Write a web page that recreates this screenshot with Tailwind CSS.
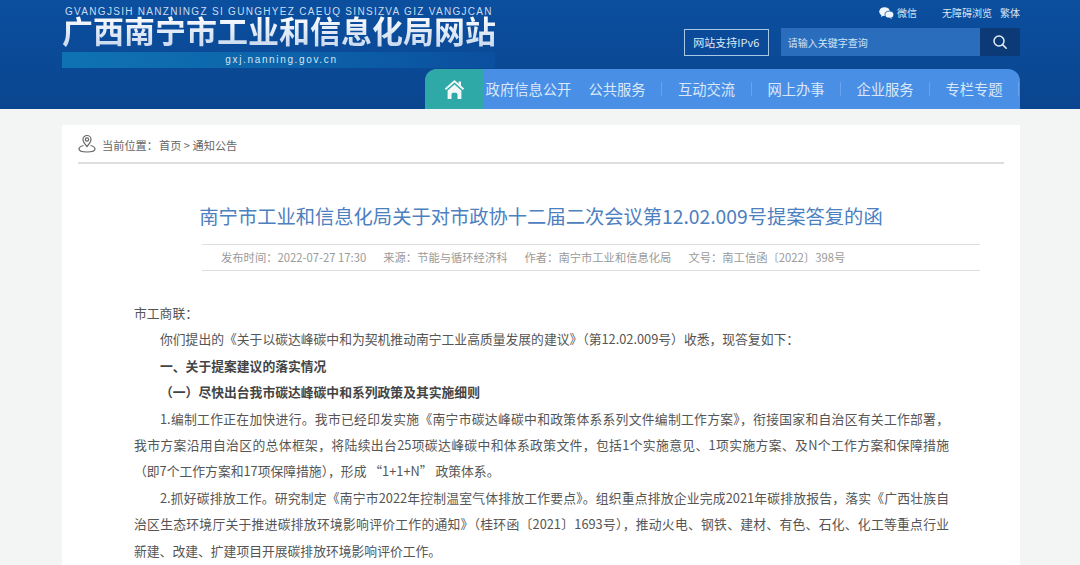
<!DOCTYPE html>
<html lang="en">
<head>
  <meta charset="UTF-8" />
  <meta name="viewport" content="width=device-width, initial-scale=1.0" />
  <title>广西南宁市工业和信息化局网站</title>
  <script src="https://cdn.jsdelivr.net/npm/@tailwindcss/browser@4"></script>
</head>
<body class="h-[565px] overflow-hidden bg-[#f3f5f5] font-['Noto_Sans_CJK_SC',sans-serif]">
  <!-- Header -->
  <header class="h-[109px] bg-gradient-to-b from-[#0b4f9f] to-[#0a458f] flex justify-between pl-[62px] pr-[60px]">
    <!-- Logo -->
    <div class="w-[363px] shrink-0 pt-[6px]">
      <div class="h-[11px] pl-[3px] text-[10px] leading-[11px] tracking-[1.3px] text-[#c9dcf2] whitespace-nowrap font-['Liberation_Sans',sans-serif]">GVANGJSIH NANZNINGZ SI GUNGHYEZ CAEUQ SINSIZVA GIZ VANGJCAN</div>
      <div class="w-[433px] h-[35px] mt-[-3px] text-[31px] leading-[31px] font-bold whitespace-nowrap bg-gradient-to-b from-white to-[#c5d6ee] bg-clip-text text-transparent">广西南宁市工业和信息化局网站</div>
      <div class="h-[16px] mt-[3px] w-[433px] bg-gradient-to-r from-[#0f73b3] via-[#0d64aa] to-[#0b4f9f] text-center pl-[6px] text-[10px] leading-[16px] tracking-[1.65px] text-[#d5e6f5] font-['Liberation_Sans',sans-serif]">gxj.nanning.gov.cn</div>
    </div>

    <!-- Right side -->
    <div class="w-[595px] flex flex-col">
      <div class="h-[28px] flex items-center justify-end text-[10px] text-[#d6e5f6] pb-[3px]">
        <svg class="w-[15px] h-[12px] mr-[3px]" viewBox="0 0 15 12" fill="#eef5fc">
          <ellipse cx="5.6" cy="4.6" rx="5.4" ry="4.4" />
          <path d="M2.6 7.5 2 10l2.6-1.6z" />
          <ellipse cx="10.4" cy="7.6" rx="4.4" ry="3.5" stroke="#0b4f9f" stroke-width="0.8" />
          <path d="M12.2 10.4 13 12l-2.4-1.2z" />
        </svg>
        <span class="w-[45px]">微信</span>
        <span class="mr-[8px]">无障碍浏览</span>
        <span>繁体</span>
      </div>
      <div class="h-[28px] flex">
        <div class="w-[85px] h-[27px] mt-[1px] ml-[259px] border border-[#a9c8e8] bg-[#0a4a98] flex items-center justify-center text-[11px] text-[#dbe9f8] whitespace-nowrap">网站支持IPv6</div>
        <div class="w-[200px] ml-[12px] bg-[#2a6dbd] flex items-center pl-[7px] text-[10px] text-[#d4e4f5]">请输入关键字查询</div>
        <div class="w-[40px] bg-[#0b3a77] flex items-center justify-center">
          <svg class="w-[14px] h-[14px]" viewBox="0 0 14 14" fill="none" stroke="#e6eef8" stroke-width="1.5">
            <circle cx="6" cy="6" r="5" />
            <path d="m9.6 9.6 3.6 3.6" stroke-linecap="round" />
          </svg>
        </div>
      </div>
      <!-- Nav -->
      <nav class="h-[40px] mt-[13px] w-[595px] bg-[#4a8fe6] rounded-t-[12px] overflow-hidden flex items-center text-[14.3px] leading-[40px] text-[#d9e8f8] whitespace-nowrap">
        <div class="w-[59px] h-[40px] bg-[#2fa8a8] flex items-center justify-center">
          <svg class="w-[21px] h-[20px]" viewBox="0 0 21 20" fill="#f2f8f8">
            <path d="M10.5 1 0.8 9.6l1.3 1.4 8.4-7.4 8.4 7.4 1.3-1.4-3.2-2.8V2.4h-2.4v2.3z" />
            <path d="M3.6 11.6 10.5 5.6l6.9 6V20h-3.9v-4.6a1.6 1.6 0 0 0-1.6-1.6H9.1a1.6 1.6 0 0 0-1.6 1.6V20H3.6z" />
          </svg>
        </div>
        <a class="w-[89px] text-center">政府信息公开</a>
        <a class="w-[88px] text-center">公共服务</a>
        <i class="w-px h-[14px] bg-[#6ba3ea]"></i>
        <a class="w-[89px] text-center">互动交流</a>
        <i class="w-px h-[14px] bg-[#6ba3ea]"></i>
        <a class="w-[88px] text-center">网上办事</a>
        <i class="w-px h-[14px] bg-[#6ba3ea]"></i>
        <a class="w-[88px] text-center">企业服务</a>
        <i class="w-px h-[14px] bg-[#6ba3ea]"></i>
        <a class="w-[88px] text-center">专栏专题</a>
        <i class="w-px h-[14px] bg-[#6ba3ea]"></i>
      </nav>
    </div>
  </header>

  <!-- Article card -->
  <main class="mx-[62px] mt-[16px] w-[958px] h-[440px] bg-white px-[16px] overflow-hidden">
    <!-- Breadcrumb -->
    <div class="h-[39px] border-b-2 border-[#dedede] flex items-center text-[11.2px] text-[#666] pt-[3px]">
      <svg class="w-[18px] h-[19px] mr-[6px] -mt-[3px]" viewBox="0 0 18 19" fill="none" stroke="#666" stroke-width="1.2">
        <path d="M9 12.5C6.5 9.8 5 8 5 5.5a4 4 0 0 1 8 0C13 8 11.5 9.8 9 12.5z" />
        <circle cx="9" cy="5.5" r="1.6" />
        <path d="M5.5 11.500C2.800 12.200 1 13.400 1 15c0 1.900 3.500 3 8 3s8-1.100 8-3c0-1.600-1.800-2.800-4.500-3.500" />
      </svg>
      <span>当前位置：</span><span class="ml-[1px]">首页 &gt; 通知公告</span>
    </div>

    <!-- Title -->
    <h1 class="mt-[38px] h-[28px] text-center text-[19.3px] leading-[28px] text-[#4d80bf] whitespace-nowrap">南宁市工业和信息化局关于对市政协十二届二次会议第12.02.009号提案答复的函</h1>

    <!-- Meta -->
    <div class="mt-[14px] ml-[124px] mr-[24px] h-[27px] border-y border-[#dedede] flex items-center pl-[19px] gap-[17px] text-[11.3px] text-[#9a9a9a] whitespace-nowrap">
      <span>发布时间：2022-07-27 17:30</span>
      <span>来源：节能与循环经济科</span>
      <span>作者：南宁市工业和信息化局</span>
      <span>文号：南工信函〔2022〕398号</span>
    </div>

    <!-- Body -->
    <div class="mt-[29px] ml-[56px] w-[815px] text-[12.8px] leading-[26.4px] text-[#555] whitespace-nowrap">
      <p>市工商联：</p>
      <p class="pl-[26px]">你们提出的《关于以碳达峰碳中和为契机推动南宁工业高质量发展的建议》（第12.02.009号）收悉，现答复如下：</p>
      <p class="pl-[26px] font-bold text-[#444]">一、关于提案建议的落实情况</p>
      <p class="pl-[26px] font-bold text-[#444]">（一）尽快出台我市碳达峰碳中和系列政策及其实施细则</p>
      <p class="pl-[26px] [text-align-last:justify]">1.编制工作正在加快进行。我市已经印发实施《南宁市碳达峰碳中和政策体系系列文件编制工作方案》，衔接国家和自治区有关工作部署，</p>
      <p class="[text-align-last:justify]">我市方案沿用自治区的总体框架，将陆续出台25项碳达峰碳中和体系政策文件，包括1个实施意见、1项实施方案、及N个工作方案和保障措施</p>
      <p>（即7个工作方案和17项保障措施），形成 “1+1+N” 政策体系。</p>
      <p class="pl-[26px] [text-align-last:justify]">2.抓好碳排放工作。研究制定《南宁市2022年控制温室气体排放工作要点》。组织重点排放企业完成2021年碳排放报告，落实《广西壮族自</p>
      <p class="[text-align-last:justify]">治区生态环境厅关于推进碳排放环境影响评价工作的通知》（桂环函〔2021〕1693号），推动火电、钢铁、建材、有色、石化、化工等重点行业</p>
      <p>新建、改建、扩建项目开展碳排放环境影响评价工作。</p>
    </div>
  </main>
</body>
</html>
